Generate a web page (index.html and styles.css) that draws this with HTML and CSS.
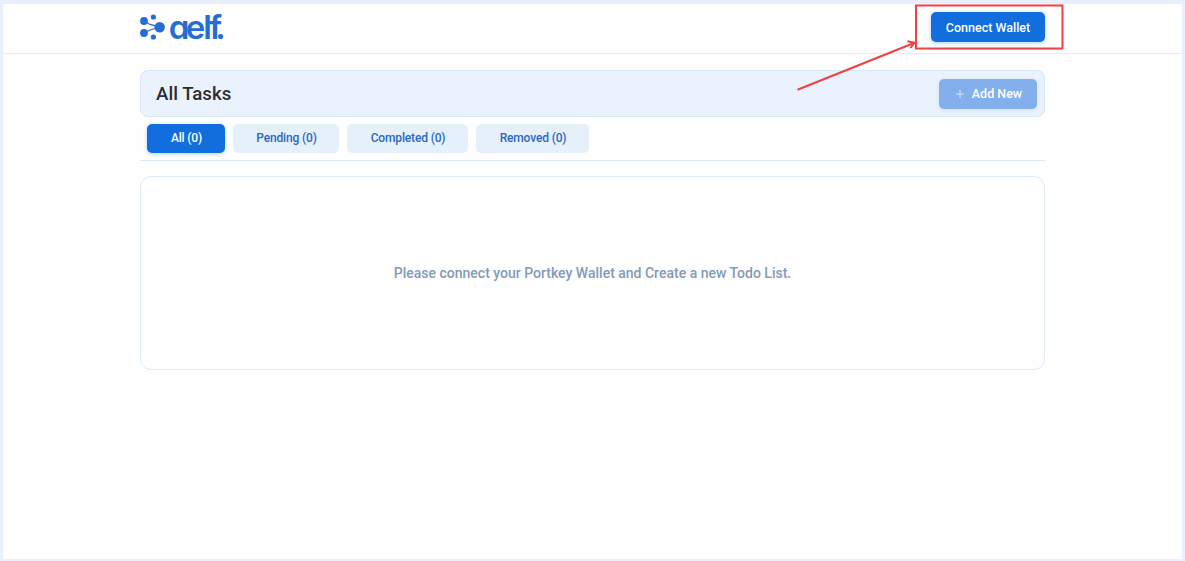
FILE: index.html
```html
<!DOCTYPE html>
<html lang="en">
<head>
<meta charset="utf-8">
<title>Todo List</title>
<link rel="stylesheet" href="styles.css">
</head>
<body>
<div class="app">
  <header class="topbar">
    <div class="topbar-inner">
      <svg class="logo" width="86" height="32" viewBox="0 0 86 32" role="img" aria-label="aelf">
        <g fill="#266cd3" stroke="#266cd3">
          <path d="M4 10L10 13.500L20 16M4 22L10 19L20 16" fill="none" stroke-width="1.300"/>
          <g stroke="none">
            <circle cx="4" cy="10" r="3.900"/>
            <circle cx="13.400" cy="6" r="2.600"/>
            <circle cx="19.700" cy="16.200" r="5.200"/>
            <circle cx="4" cy="22" r="3.900"/>
            <circle cx="13.400" cy="26" r="2.600"/>
          </g>
        </g>
        <text class="logo-text" x="28.700 45.800 63.300 69.300 75.300" y="28">aelf.</text>
      </svg>
      <button class="btn connect">Connect Wallet</button>
    </div>
  </header>
  <main class="content">
    <section class="title-bar">
      <h1>All Tasks</h1>
      <button class="btn add"><svg class="plus" width="8" height="8" viewBox="0 0 8 8"><path d="M4 0V8M0 4H8"/></svg><span>Add New</span></button>
    </section>
    <nav class="tabs">
      <button class="tab tab-all active">All (0)</button>
      <button class="tab tab-pending">Pending (0)</button>
      <button class="tab tab-completed">Completed (0)</button>
      <button class="tab tab-removed">Removed (0)</button>
    </nav>
    <section class="empty"><p>Please connect your Portkey Wallet and Create a new Todo List.</p></section>
  </main>
</div>
<svg class="callout" width="1185" height="130" viewBox="0 0 1185 130">
  <rect x="916" y="5.500" width="146.500" height="43"/>
  <path d="M797.500 89.700L914 43M907.500 41.300L914.500 42.700L910.500 48"/>
</svg>
</body>
</html>
```
FILE: styles.css
```css
* { box-sizing: border-box; }
body {
  margin: 0;
  height: 561px;
  padding: 4px 3px 2px;
  background: #e8f0fb;
  font-family: Roboto, "Liberation Sans", sans-serif;
  overflow: hidden;
}
.app { height: 555px; background: #fefefe; }
.topbar { height: 50px; border-bottom: 1px solid #e1edf8; }
.topbar-inner {
  width: 905px;
  height: 46px;
  margin-left: 137px;
  display: flex;
  align-items: center;
  justify-content: space-between;
}
.logo { overflow: visible; }
.logo-text {
  font-family: Inter, sans-serif;
  font-size: 33px;
  font-weight: 600;
  font-feature-settings: "cv11";
  fill: #266cd3;
}
.btn {
  height: 30px;
  border: 0;
  border-radius: 5px;
  padding: 0;
  display: flex;
  align-items: center;
  justify-content: center;
  font: 500 12.5px Roboto, sans-serif;
  color: #fff;
}
.connect { width: 114px; background: #126edc; box-shadow: 0 1px 4px #acd3f7; }
.content { width: 905px; margin: 16px 0 0 137px; }
.title-bar {
  height: 47px;
  padding: 0 7px 0 15px;
  display: flex;
  align-items: center;
  justify-content: space-between;
  background: #eaf2fd;
  border: 1px solid #d8e6f6;
  border-radius: 8px;
}
h1 { margin: 0; font-size: 18.7px; font-weight: 500; color: #2b2d31; }
.add { width: 98px; gap: 8px; padding-left: 2px; background: #83b0ec; box-shadow: 0 1px 4px #cfe2f8; }
.plus { fill: none; stroke: #d9e8fb; stroke-width: 1; }
.tabs {
  height: 44px;
  padding: 7px 7px 0;
  display: flex;
  gap: 8px;
  border-bottom: 1px solid #dce8f6;
}
.tab {
  height: 29px;
  border: 0;
  border-radius: 5px;
  padding: 0 0 2px 1px;
  background: #e6f0fb;
  color: #2a69c4;
  font: 500 12px Roboto, sans-serif;
  letter-spacing: -0.15px;
}
.tab-all { width: 78px; }
.tab-pending { width: 106px; }
.tab-completed { width: 121px; }
.tab-removed { width: 113px; }
.active { background: #126edc; color: #fff; box-shadow: 0 1px 4px #acd3f7; }
.empty {
  height: 194px;
  margin-top: 15px;
  border: 1px solid #dfebf8;
  border-radius: 11px;
  display: flex;
  align-items: center;
  justify-content: center;
}
.empty p { margin: 0; font-size: 14px; font-weight: 500; color: #829bb7; }
.callout {
  position: absolute;
  top: 0;
  left: 0;
  pointer-events: none;
  fill: none;
  stroke: #ee4141;
  stroke-width: 2;
}
```
